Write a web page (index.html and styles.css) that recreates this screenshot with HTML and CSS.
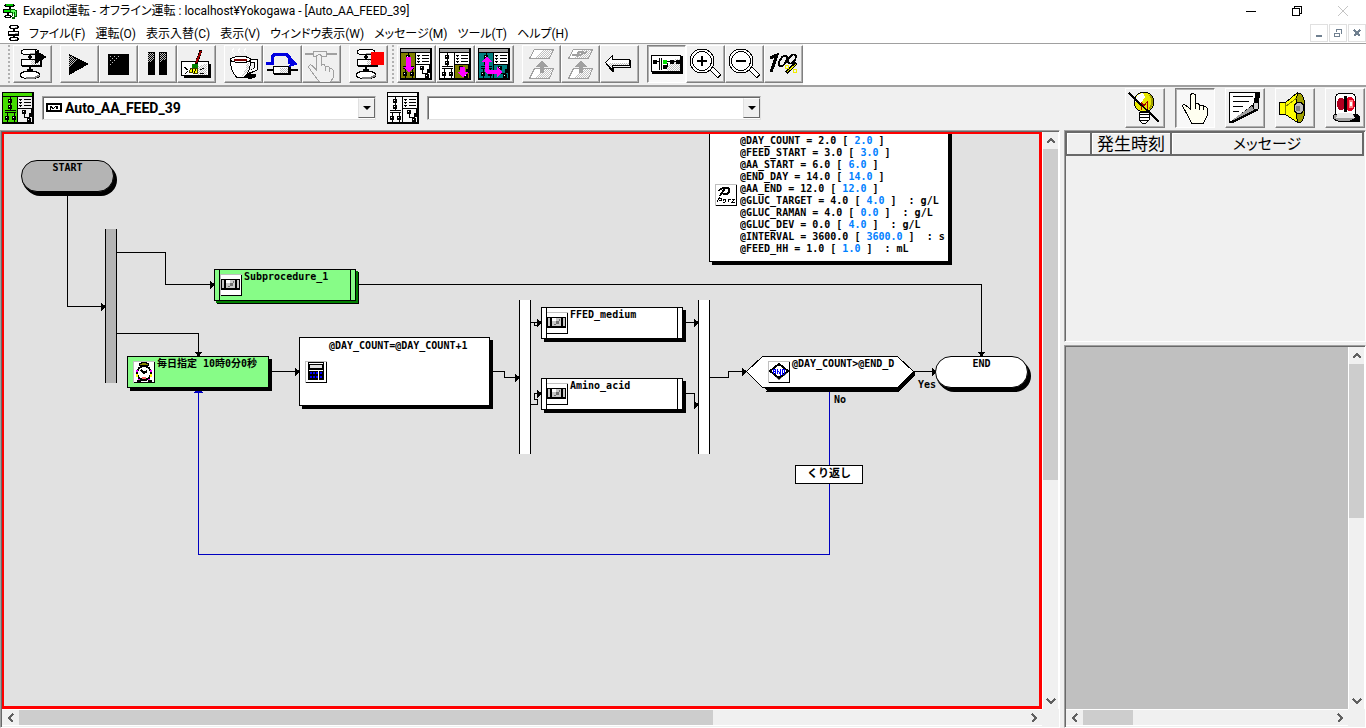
FILE: index.html
```html
<!DOCTYPE html>
<html lang="ja">
<head>
    <meta charset="UTF-8">
    <title>Exapilot運転</title>
    <link rel="stylesheet" href="styles.css">
</head>
<body>
    <!-- shared icon parts -->
    <svg class="defs" width="0" height="0" aria-hidden="true">
        <defs>
            <pattern id="dither" width="2" height="2" patternUnits="userSpaceOnUse">
                <path d="M0 0h1v1h-1zM1 1h1v1h-1z" fill="#c0c0c0"/>
            </pattern>
            <pattern id="specks" width="4" height="4" patternUnits="userSpaceOnUse">
                <path d="M0 0h1v1h-1zM2 2h1v1h-1z" fill="#c0c0c0"/>
            </pattern>
            <symbol id="flow" viewBox="0 0 36 36">
                <path d="M16 9v4M16 20v6M13 24h6M14 11h4" stroke="#000" stroke-width="2" fill="none"/>
                <ellipse cx="16" cy="6" rx="9" ry="3" fill="#fff" stroke="#000"/>
                <path d="M16 8q6 0 8-2" stroke="#a0a0a0" fill="none"/>
                <rect x="7.500" y="13.500" width="19" height="6" fill="#fff" stroke="#000"/>
                <path d="M8 20h20M27 14v6" stroke="#000" stroke-width="2"/>
                <rect x="17" y="14" width="8" height="5" fill="url(#dither)"/>
                <ellipse cx="16" cy="29" rx="10" ry="4" fill="#fff" stroke="#000"/>
                <path d="M12 32q10 1 13-3" stroke="#808080" stroke-width="2" fill="none"/>
            </symbol>
            <symbol id="chart" viewBox="0 0 32 32">
                <path d="M0 .5h31M.5 0v31M0 4.500h31M15.500 4v27M16 16.500h15" stroke="#000" fill="none"/>
                <path d="M31 0v32M0 31h32" stroke="#000" stroke-width="2"/>
                <path d="M6 7h4v4h-4zM6 13h4v4h-4zM3 24h4v4h-4zM10 24h4v4h-4zM20 18h4v4h-4zM27 21h4v4h-4zM25 26h4v4h-4z" fill="#000"/>
                <path d="M7 8h1v1h-1zM7 14h1v1h-1zM4 25h1v1h-1zM11 25h1v1h-1zM21 19h1v1h-1zM26 27h1v1h-1z" fill="#fff"/>
                <path d="M8.500 5v13M3 18.500h11M3 20.500h11M5.500 20v10M12.500 20v10M22.500 22v3.500h5M29.500 17v4" stroke="#000" fill="none"/>
                <path d="M17.500 7l1 1 1-1M17.500 10l1 1 1-1M17.500 13l1 1 1-1M22 7.500h7M22 10.500h7M22 13.500h7" stroke="#000" fill="none"/>
            </symbol>
            <symbol id="unit" viewBox="0 0 22 22">
                <path d="M0 0h22v22h-22z" fill="#fff"/>
                <path d="M.5 22v-21.500h21" stroke="#c0c0c0" fill="none"/>
                <path d="M21.500 1v20.500h-21" stroke="#000" fill="none"/>
                <path d="M1 5h19v11h-19z" fill="#000"/>
                <path d="M2 6h2v8h-2zM6 6h9v8h-9zM17 6h2v8h-2z" fill="#c8c8c8"/>
                <path d="M8 12h2v1h-2zM10 9h3v3h-3zM13 7h1v2h-1z" fill="#707070"/>
                <path d="M6 6h4v3h-4z" fill="#fff"/>
            </symbol>
            <symbol id="up" viewBox="0 0 12 12"><path d="M2 8l4-4 4 4" fill="none" stroke="#606060" stroke-width="2"/></symbol>
            <symbol id="down" viewBox="0 0 12 12"><path d="M2 4l4 4 4-4" fill="none" stroke="#606060" stroke-width="2"/></symbol>
            <symbol id="left" viewBox="0 0 12 12"><path d="M8 2l-4 4 4 4" fill="none" stroke="#606060" stroke-width="2"/></symbol>
            <symbol id="right" viewBox="0 0 12 12"><path d="M4 2l4 4-4 4" fill="none" stroke="#606060" stroke-width="2"/></symbol>
        </defs>
    </svg>

    <header class="titlebar">
        <svg class="app-icon" width="16" height="16" viewBox="0 0 16 16">
            <path d="M3 1h9v1h1v1h-1v1h-9v-1h-1v-1h1z"/>
            <path d="M4 1h7v2h-7z" fill="#00c000"/>
            <path d="M7 4h2v2h-2zM1 6h9v4h-9z"/>
            <path d="M2 7h6v2h-6z" fill="#00e000"/>
            <path d="M8 6h5v1h2v7h-2v2h-3v-2h2v-3h-1v2h-1v-3h-2z" fill="#006000"/>
            <path d="M9 7h4v1h1v5h-1v-4h-1v2h-1v-2h-2z" fill="#60ff60"/>
            <path d="M5 10h2v2h2v1h1v1h-1v1h-6v-1h-1v-1h1v-1h2z"/>
            <path d="M4 13h4v1h-4z" fill="#fff"/>
        </svg>
        <h1 class="title">Exapilot運転 - オフライン運転 : localhost¥Yokogawa - [Auto_AA_FEED_39]</h1>
        <div class="window-buttons">
            <button aria-label="最小化"><svg width="12" height="12" viewBox="0 0 12 12"><path d="M1 6.500h10" stroke="#000"/></svg></button>
            <button aria-label="元に戻す"><svg width="12" height="12" viewBox="0 0 12 12"><path d="M1.500 3.500h7v7h-7zM3.500 3.500v-2h7v7h-2" stroke="#000" fill="none"/></svg></button>
            <button aria-label="閉じる"><svg width="12" height="12" viewBox="0 0 12 12"><path d="M1 1l10 10M11 1l-10 10" stroke="#c4c4c4"/></svg></button>
        </div>
    </header>

    <nav class="menubar">
        <svg class="menu-icon" width="16" height="16" viewBox="0 0 16 16">
            <path d="M4 0h8v1h1v2h-1v1h-3v2h4v5h-4v1h3v1h1v2h-1v1h-8v-1h-1v-2h1v-1h3v-1h-5v-5h5v-2h-3v-1h-1v-2h1z"/>
            <path d="M5 1h6v2h-6zM3 7h9v2h-9zM5 13h6v2h-6z" fill="#fff"/>
            <path d="M9 2h2v1h-2zM9 8h3v1h-3zM9 14h2v1h-2z" fill="#a0a0a0"/>
        </svg>
        <button>ファイル(F)</button>
        <button>運転(O)</button>
        <button>表示入替(C)</button>
        <button>表示(V)</button>
        <button>ウィンドウ表示(W)</button>
        <button>メッセージ(M)</button>
        <button>ツール(T)</button>
        <button>ヘルプ(H)</button>
        <div class="child-buttons">
            <button aria-label="最小化"><svg width="10" height="10" viewBox="0 0 10 10"><path d="M2 8h6" stroke="#708090" stroke-width="2"/></svg></button>
            <button aria-label="元に戻す"><svg width="10" height="10" viewBox="0 0 10 10"><path d="M1.500 5.500h5v3h-5zM3.500 4v-2.500h5v4h-1M1 5h6M3 1.500h6" stroke="#708090" fill="none"/></svg></button>
            <button aria-label="閉じる"><svg width="10" height="10" viewBox="0 0 10 10"><path d="M2 2l6 6M8 2l-6 6" stroke="#708090" stroke-width="2"/></svg></button>
        </div>
    </nav>

    <div class="toolbar">
        <div class="tool-group">
            <span class="grip"></span>
            <div class="tools">
                <button aria-label="開始"><svg viewBox="0 0 36 36"><use href="#flow"/><path d="M21 4l12 7-12 7z"/></svg></button>
            </div>
            <div class="tools">
                <button aria-label="実行"><svg viewBox="0 0 36 36"><path d="M8 8l20 10-20 11z"/><path d="M8 9l9 5-9 7z" fill="url(#dither)"/></svg></button>
                <button aria-label="停止"><svg viewBox="0 0 36 36"><path d="M8 8h21v21h-21z"/><path d="M9 9h14l-8 7-6 5z" fill="url(#specks)"/></svg></button>
                <button aria-label="一時停止"><svg viewBox="0 0 36 36"><path d="M9 6h7v23h-7zM20 6h8v23h-8z"/><path d="M9 7h6v7l-6 3zM21 7h6v6l-6 3z" fill="url(#dither)"/></svg></button>
                <button aria-label="消去"><svg viewBox="0 0 36 36"><path d="M6 18h27v14h-27z"/><path d="M3.500 15.500h27v14h-27z" fill="#fff" stroke="#000"/><path d="M19 21l10-4v12h-10z" fill="url(#dither)"/><path d="M6 21l4 3M7 28l3-3M22 24l4-2M22 27l4 1" stroke="#000"/><path d="M23 4l-2 6-3 8" stroke="#000" stroke-width="3" fill="none"/><path d="M23 5l-2 5-3 7" stroke="#a00000" stroke-width="2" fill="none"/><path d="M14 18h6v4h-6z" fill="#008000"/><path d="M13 22h7l-1 6-8-2z" fill="#ff0" stroke="#404000"/><path d="M15 23l-1 3M18 23l-2 4" stroke="#000"/></svg></button>
            </div>
            <div class="tools">
                <button aria-label="休止"><svg viewBox="0 0 36 36"><path d="M12 31l10-3h9v3l-5 2z"/><path d="M25 15h6v8l-8 4" fill="none" stroke="#000" stroke-width="4"/><path d="M25 15h6v8l-8 3" fill="none" stroke="#fff" stroke-width="2"/><path d="M5.500 14q0 11 6 17h8q6-6 6-17z" fill="#fff" stroke="#000"/><path d="M22 17h2q0 8-5 13h-3q5-5 6-13z" fill="url(#dither)"/><ellipse cx="15.500" cy="13.500" rx="10" ry="3" fill="#fff" stroke="#000"/><path d="M9 13h13v2h-13z" fill="#780000"/><path d="M9 2l-2 3 3 3M15 2l-2 3 3 3M21 2l-2 3 3 3" stroke="#fff" fill="none"/></svg></button>
                <button aria-label="スキップ"><svg viewBox="0 0 36 36"><path d="M2 17h6v-6l3-3h11l3 3v5h4" fill="none" stroke="#0000e0" stroke-width="3"/><path d="M27 12l7 6-9 3z" fill="#0000e0"/><path d="M3 24h31" stroke="#000" stroke-width="2"/><path d="M9.500 20.500h15v7h-15z" fill="#fff" stroke="#000"/><path d="M16 22h8v5h-8z" fill="url(#dither)"/><path d="M10 28h16v-7" stroke="#000" fill="none" stroke-width="2"/></svg></button>
                <button aria-label="手動" disabled><svg viewBox="0 0 36 36"><path d="M2 8h9M24 8h10" stroke="#a0a0a0" stroke-width="2"/><path d="M10.500 5.500h13v5h-13z" fill="none" stroke="#a0a0a0"/><path d="M13.500 24v-14q3-3 5 0v9q3-2 4 2 4-2 4 2 4-1 4 3v5l-3 5h-11l-7-9-4-6q1-4 4-1z" fill="#f0f0f0" stroke="#a0a0a0"/><path d="M22.500 20v5M26.500 22v4" stroke="#a0a0a0"/></svg></button>
            </div>
            <div class="tools">
                <button aria-label="強制終了"><svg viewBox="0 0 36 36"><use href="#flow"/><path d="M21 6h13v13h-13z" fill="#f00"/></svg></button>
            </div>
        </div>
        <div class="tool-group">
            <span class="grip"></span>
            <div class="tools">
                <button aria-label="表示1"><svg viewBox="0 0 36 36"><path d="M2 2h32v32h-32z" fill="#fff"/><path d="M2 2h32v4h-32z" fill="#a0a0a0"/><path d="M2 6h15v28h-15z" fill="#808000"/><use href="#chart" x="2" y="2" width="32" height="32"/><path d="M8 11h5v10h3l-5 6-5-6h2z" fill="#f0f"/></svg></button>
                <button aria-label="表示2"><svg viewBox="0 0 36 36"><path d="M2 2h32v32h-32z" fill="#fff"/><path d="M2 2h32v4h-32z" fill="#a0a0a0"/><path d="M17 18h16v15h-16z" fill="#808000"/><use href="#chart" x="2" y="2" width="32" height="32"/><path d="M23 21h5v5h3l-5 6-6-6h3z" fill="#f0f"/></svg></button>
                <button aria-label="表示3"><svg viewBox="0 0 36 36"><path d="M2 2h32v32h-32z" fill="#008080"/><path d="M2 2h32v4h-32z" fill="#a0a0a0"/><path d="M17 6h16v12h-16z" fill="#fff"/><use href="#chart" x="2" y="2" width="32" height="32"/><path d="M11 10l5 6h-3v8h8v-3l6 5-6 5v-3h-10l-2-2v-10h-3z" fill="#f0f"/></svg></button>
            </div>
            <div class="tools">
                <button aria-label="上へ" disabled><svg viewBox="0 0 36 36"><path d="M11.500 3.500h19l-4 9h-20zM11.500 22.500h19l-4 10h-20z" fill="#fff" stroke="#a0a0a0"/><path d="M20 4h10l-4 8h-13zM20 23h10l-4 9h-13z" fill="url(#dither)"/><path d="M19 14l6 7h-4v6h-4v-6h-4z" fill="#a0a0a0"/></svg></button>
                <button aria-label="上へ展開" disabled><svg viewBox="0 0 36 36"><path d="M11.500 3.500h19l-4 9h-20zM11.500 22.500h19l-4 10h-20z" fill="#fff" stroke="#a0a0a0"/><path d="M20 4h10l-4 8h-13zM20 23h10l-4 9h-13z" fill="url(#dither)"/><path d="M10 9h5l2-3h5M15 10l10-4" stroke="#a0a0a0" stroke-width="2" fill="none"/><path d="M19 14l6 7h-4v6h-4v-6h-4z" fill="#a0a0a0"/></svg></button>
                <button aria-label="戻る"><svg viewBox="0 0 36 36"><path d="M5 18l7 6v-3h17v-7h1v8h-17v4h-2z"/><path d="M4.500 16.500l7-7v4h17v6h-17v4z" fill="#fff" stroke="#000"/><path d="M10 17h18v2h-17v3l-4-4z" fill="url(#dither)"/></svg></button>
            </div>
            <div class="tools">
                <button class="pressed" aria-label="全体図"><svg viewBox="0 0 36 36"><path d="M4 10h31v18h-31z"/><path d="M3.500 9.500h29v16h-29z" fill="#fff" stroke="#000"/><path d="M18 21l10-8h4v12h-13z" fill="url(#dither)"/><path d="M5 15.500h5M11.500 12v12M13.500 12v12M16 15.500h15M19.500 17v3h-3M10 15h2" stroke="#000" fill="none"/><path d="M5 14h4v4h-4zM22 14h4v4h-4zM28 14h4v4h-4zM15 19h4v4h-4z"/><path d="M15 14h4v4h-4z" fill="#0d0"/></svg></button>
                <button aria-label="拡大"><svg viewBox="0 0 36 36"><path d="M24 22l9 9" stroke="#000" stroke-width="5"/><path d="M25 23l7 7" stroke="#fff" stroke-width="3"/><circle cx="15" cy="15" r="12" fill="#fff" stroke="#000"/><circle cx="15" cy="15" r="9.500" fill="#fff" stroke="#000"/><path d="M10 15h10M15 10v10" stroke="#000" stroke-width="2"/></svg></button>
                <button aria-label="縮小"><svg viewBox="0 0 36 36"><path d="M24 22l9 9" stroke="#000" stroke-width="5"/><path d="M25 23l7 7" stroke="#fff" stroke-width="3"/><circle cx="15" cy="15" r="12" fill="#fff" stroke="#000"/><circle cx="15" cy="15" r="9.500" fill="#fff" stroke="#000"/><path d="M10 15h10" stroke="#000" stroke-width="2"/></svg></button>
                <button aria-label="等倍"><svg viewBox="0 0 36 36"><path d="M5 12l7-3-6 17" fill="none" stroke="#000" stroke-width="3"/><ellipse cx="18" cy="15" rx="3" ry="6" transform="rotate(30 18 15)" fill="none" stroke="#000" stroke-width="2"/><ellipse cx="27" cy="13" rx="3" ry="5" transform="rotate(35 27 13)" fill="none" stroke="#000" stroke-width="2"/><path d="M31 17l-10 10" stroke="#000" stroke-width="3"/><path d="M31 18l-9 8M20 19h3v3h-3zM28 23h3v3h-3z" stroke="#ee0" stroke-width="1" fill="none"/></svg></button>
            </div>
        </div>
    </div>

    <div class="selectbar">
        <svg class="chart-icon" viewBox="0 0 32 32"><path d="M0 0h32v32h-32z" fill="#f0f0f0"/><path d="M0 0h32v4h-17v28h-15z" fill="#4d0"/><use href="#chart"/></svg>
        <div class="combo">
            <svg width="16" height="9" viewBox="0 0 16 9"><path d="M1 1h14v7h-14z" fill="#fff" stroke="#000" stroke-width="2"/><path d="M4 3h2v1h1v1h1v-1h1v-1h3v3h-2v-2h-1v1h-1v1h-2v-1h-1v2h-1z"/></svg>
            <select aria-label="プロシージャ"><option>Auto_AA_FEED_39</option></select>
            <span class="combo-arrow"></span>
        </div>
        <svg class="chart-icon" viewBox="0 0 32 32"><path d="M0 0h32v32h-32z" fill="#fafafa"/><use href="#chart"/></svg>
        <div class="combo">
            <select aria-label="サブプロシージャ"><option></option></select>
            <span class="combo-arrow"></span>
        </div>
        <div class="status-tools">
            <button aria-label="ランプ"><svg viewBox="0 0 36 36"><circle cx="18" cy="13" r="10" fill="#e8e800" stroke="#000"/><path d="M9 13q0-8 8-9l2 4-4 6z" fill="#fff"/><path d="M24 6q5 8-1 14" stroke="#a0a000" fill="none" stroke-width="2"/><path d="M15 21v-8l3 4 3-4v8" stroke="#a00000" fill="none"/><path d="M13 23h10v8l-3 3h-4l-3-3z" fill="#fff" stroke="#000"/><path d="M13 25h11M13 28h11M14 31h9" stroke="#000"/><path d="M3 4l30 29" stroke="#000" stroke-width="2"/></svg></button>
            <button class="pressed" aria-label="操作"><svg viewBox="0 0 36 36"><path d="M14.500 20v-14q2-3 5 0v9q4-1 4 2 4-2 4 1 4-1 4 3v5l-4 8h-12l-3-6-6-11q1-3 4 0z" fill="#fffff0" stroke="#000"/><path d="M19.500 14v6M23.500 16v5M27.500 17v4" stroke="#000"/></svg></button>
            <button aria-label="記録"><svg viewBox="0 0 36 36"><path d="M3.500 3.500h30l-1 12-29 18z" fill="#fff" stroke="#000"/><path d="M7 7l2 1 2-1 2 1 2-1 2 1 2-1 2 1 2-1 2 1 2-1M7 12l2 1 2-1 2 1 2-1 2 1 2-1 2 1 2-1M7 17l2 1 2-1 2 1 2-1 2 1M7 22l2 1 2-1 2 1" stroke="#000" fill="none"/><path d="M3 34l23-18 7 5-26 13z"/><path d="M6 31l20-14 2 4-20 10z" fill="#a0a0a0"/><path d="M29 4h4v11h-5z"/><ellipse cx="30" cy="17" rx="3" ry="4" fill="#d0d0d0" stroke="#000"/></svg></button>
            <button aria-label="音"><svg viewBox="0 0 36 36"><ellipse cx="23" cy="19" rx="6" ry="15" fill="#a0a000" stroke="#000"/><path d="M3.500 13.500h6l12-10q-3 15 0 30l-12-8h-6z" fill="#ff0" stroke="#000"/><path d="M9 14v11M9 18l12-9" stroke="#808000"/><ellipse cx="23" cy="19" rx="5" ry="6" fill="#c0c0c0" stroke="#000"/><path d="M20 17h4v5h-4z" fill="#808080"/></svg></button>
            <button aria-label="警報"><svg viewBox="0 0 36 36"><path d="M8 29l6-4h17l3 3v5h-22z"/><ellipse cx="18" cy="28" rx="11" ry="5" fill="#a0a0a0" stroke="#000"/><path d="M9.500 25v-15q0-6 6-6h8q6 0 6 6v15z" fill="#fff" stroke="#000"/><ellipse cx="15" cy="15" rx="4" ry="6" fill="#b00020"/><ellipse cx="24" cy="15" rx="5" ry="7" fill="#e00020"/><path d="M19 7v16" stroke="#000" stroke-width="3"/><path d="M23 11h4v8h-4z" fill="#ff8080"/><path d="M24 13h2v4h-2z" fill="#fff"/><path d="M12 24h14l3 5h-19z" fill="#e8e8e8"/></svg></button>
        </div>
    </div>

    <main class="workspace">
        <section class="chart-pane">
            <div class="canvas">
                <!-- connectors -->
                <svg class="wires" width="1035" height="572" viewBox="4 134 1035 572">
                    <g fill="none" stroke="#000">
                        <path d="M67.500 195v111.500h38M117 252.500h48.500v32h49M117 333.500h81.500v23M271 371.500h28M358 284.500h623.500v72M491 371.500h13.500v6h15M531 322.500h10M534.500 323v2h3M531 404.500h6.500v-5h-3v-6h7M684 322.500h14M684 393.500h10.500v11h4M710 377.500h18.500v-6h18M913 371.500h23"/>
                        <path d="M829.500 388v166.500h-631v-165" stroke="#0000c0"/>
                    </g>
                    <path d="M101 303l4 3.500-4 4zM210 281l4 3.500-4 4zM295 368l4 3.500-4 4zM515 374l4 3.500-4 4zM537 319l4 3.500-4 4zM537 390l4 3.500-4 4zM694 319l4 3.500-4 4zM694 401l4 3.500-4 4zM742 368l4 3.500-4 4zM932 368l4 3.500-4 4zM195 352h7l-3.500 4zM978 352h7l-3.500 4z" stroke="#000"/>
                    <path d="M195 392h7l-3.500-4z" fill="#0000c0" stroke="#0000c0"/>
                    <path d="M764 391l3 1h132l16-19-3-3-16 17z"/>
                    <path d="M765 388h134l15-16v4l-15 14h-132z" stroke="#000"/>
                    <path d="M746.500 371.500l16-15h135l16 15-16 16h-135z" fill="#fff" stroke="#000"/>
                </svg>

                <div class="terminal start">START</div>
                <div class="sync sync-start"></div>
                <div class="sync sync-split"></div>
                <div class="sync sync-join"></div>

                <div class="node unit sub1 active">
                    <svg width="22" height="22"><use href="#unit"/></svg>
                    <span>Subprocedure_1</span>
                </div>
                <div class="node timer active">
                    <svg width="22" height="22" viewBox="0 0 22 22"><path d="M0 0h22v22h-22z" fill="#fff"/><path d="M.5 22v-21.500h21" stroke="#c0c0c0" fill="none"/><path d="M21.500 1v20.500h-21" stroke="#000" fill="none"/><path d="M6 3l5-2 5 2-2 3h-6z" fill="#880" stroke="#000"/><circle cx="11" cy="12" r="7" fill="#fff" stroke="#000" stroke-width="2"/><path d="M4 9v2M18 9v2M6 18v1M16 18v1" stroke="#e0f" stroke-width="2"/><path d="M4 13v3M18 13v3" stroke="#ff0" stroke-width="2"/><path d="M8 9l3 3 3-2" stroke="#000" stroke-width="2" fill="none"/><path d="M9 16h4v2h-4z" fill="#f66"/><path d="M4 20h4M15 20h4" stroke="#000" stroke-width="2"/></svg>
                    <span>毎日指定 10時0分0秒</span>
                </div>
                <div class="node calc">
                    <svg width="22" height="22" viewBox="0 0 22 22"><path d="M0 0h22v22h-22z" fill="#fff"/><path d="M.5 22v-21.500h21" stroke="#c0c0c0" fill="none"/><path d="M21.500 1v20.500h-21" stroke="#000" fill="none"/><path d="M3 1h16v18h-16z"/><path d="M5 4h12v3h-12z" fill="#e0e0e0"/><path d="M4 9.500h14M13.500 9v10M4 2.500h14" stroke="#fff"/><path d="M5 11h2v2h-2zM8 11h2v2h-2zM11 11h2v2h-2zM15 11h2v2h-2zM5 15h2v2h-2zM8 15h2v2h-2zM11 15h2v2h-2zM15 15h2v2h-2z" fill="#00f"/></svg>
                    <span>@DAY_COUNT=@DAY_COUNT+1</span>
                </div>
                <div class="node unit feed">
                    <svg width="22" height="22"><use href="#unit"/></svg>
                    <span>FFED_medium</span>
                </div>
                <div class="node unit amino">
                    <svg width="22" height="22"><use href="#unit"/></svg>
                    <span>Amino_acid</span>
                </div>
                <div class="decision">
                    <svg width="22" height="22" viewBox="0 0 22 22"><path d="M0 0h22v22h-22z" fill="#fff"/><path d="M.5 22v-21.500h21" stroke="#c0c0c0" fill="none"/><path d="M21.500 1v20.500h-21" stroke="#000" fill="none"/><path d="M6 15l5 4 9-7-3-2z" fill="#808080"/><path d="M2 10l9-7 9 7-9 7z" fill="#fff" stroke="#000" stroke-width="2"/><path d="M5 13v-5h2v5M5 10h2M9 13v-5l3 5v-5M14 8v5h2l1-2-1-3z" stroke="#00f" fill="none"/></svg>
                    <span>@DAY_COUNT&gt;@END_D</span>
                </div>
                <div class="terminal end">END</div>
                <span class="branch yes">Yes</span>
                <span class="branch no">No</span>
                <div class="loop">くり返し</div>

                <div class="params">
                    <svg width="22" height="22" viewBox="0 0 22 22"><path d="M0 0h22v22h-22z" fill="#fff"/><path d="M.5 22v-21.500h21" stroke="#c0c0c0" fill="none"/><path d="M21.500 1v20.500h-21" stroke="#000" fill="none"/><path d="M4 7q1-3 7-3 5 0 3 4-2 3-6 2M10 4l-5 8" stroke="#000" stroke-width="2" fill="none"/><path d="M5 13l-3 5M4 14h2v2h-2M8 17v-2h3l-1 3h-2M13 18l1-3h2M17 15h3l-3 3h3" stroke="#000" fill="none"/></svg>
                    <ul>
                        <li>@DAY_COUNT = 2.0 [ <b>2.0</b> ]</li>
                        <li>@FEED_START = 3.0 [ <b>3.0</b> ]</li>
                        <li>@AA_START = 6.0 [ <b>6.0</b> ]</li>
                        <li>@END_DAY = 14.0 [ <b>14.0</b> ]</li>
                        <li>@AA_END = 12.0 [ <b>12.0</b> ]</li>
                        <li>@GLUC_TARGET = 4.0 [ <b>4.0</b> ]  : g/L</li>
                        <li>@GLUC_RAMAN = 4.0 [ <b>0.0</b> ]  : g/L</li>
                        <li>@GLUC_DEV = 0.0 [ <b>4.0</b> ]  : g/L</li>
                        <li>@INTERVAL = 3600.0 [ <b>3600.0</b> ]  : se</li>
                        <li>@FEED_HH = 1.0 [ <b>1.0</b> ]  : mL</li>
                    </ul>
                </div>
            </div>
            <div class="scroll-v">
                <button aria-label="上"><svg width="12" height="12"><use href="#up"/></svg></button>
                <div class="track"><div class="thumb chart-v"></div></div>
                <button aria-label="下"><svg width="12" height="12"><use href="#down"/></svg></button>
            </div>
            <div class="scroll-h">
                <button aria-label="左"><svg width="12" height="12"><use href="#left"/></svg></button>
                <div class="track"><div class="thumb chart-h"></div></div>
                <button aria-label="右"><svg width="12" height="12"><use href="#right"/></svg></button>
            </div>
        </section>

        <aside class="side">
            <div class="messages">
                <table>
                    <thead>
                        <tr><th class="col-mark"></th><th class="col-time">発生時刻</th><th class="col-text">メッセージ</th></tr>
                    </thead>
                </table>
            </div>
            <div class="log-pane">
                <div class="log"></div>
                <div class="scroll-v">
                    <button aria-label="上"><svg width="12" height="12"><use href="#up"/></svg></button>
                    <div class="track"><div class="thumb log-v"></div></div>
                    <button aria-label="下"><svg width="12" height="12"><use href="#down"/></svg></button>
                </div>
                <div class="scroll-h">
                    <button aria-label="左"><svg width="12" height="12"><use href="#left"/></svg></button>
                    <div class="track"><div class="thumb log-h"></div></div>
                    <button aria-label="右"><svg width="12" height="12"><use href="#right"/></svg></button>
                </div>
            </div>
        </aside>
    </main>
</body>
</html>
```

FILE: styles.css
```css
* {
    box-sizing: border-box;
}
body {
    margin: 0;
    height: 100vh;
    display: flex;
    flex-direction: column;
    overflow: hidden;
    background-color: #f0f0f0;
    color: #000;
    font-family: Roboto, "Noto Sans CJK JP", sans-serif;
    font-size: 12px;
    font-feature-settings: "palt";
}
button {
    display: flex;
    align-items: center;
    justify-content: center;
    margin: 0;
    padding: 0;
    border: 0;
    background: none;
    color: inherit;
    font: inherit;
    font-feature-settings: inherit;
}
svg {
    display: block;
    flex: none;
    shape-rendering: crispEdges;
}
.defs {
    position: absolute;
}

/* title and menu */
.titlebar {
    display: flex;
    align-items: center;
    height: 22px;
    padding-left: 2px;
    background-color: #fff;
}
.title {
    flex: 1;
    margin: 0 0 0 5px;
    font-size: 12px;
    font-weight: normal;
    line-height: 22px;
    white-space: nowrap;
}
.window-buttons {
    display: flex;
}
.window-buttons button {
    width: 46px;
    height: 22px;
}
.menubar {
    display: flex;
    align-items: center;
    gap: 10px;
    height: 22px;
    padding-left: 6px;
    background-color: #fff;
    border-bottom: 1px solid #a0a0a0;
    white-space: nowrap;
}
.menu-icon {
    margin-right: -3px;
}
.child-buttons {
    display: flex;
    gap: 1px;
    margin-left: auto;
}
.child-buttons button {
    width: 18px;
    height: 18px;
    border: 1px solid #e0e0e0;
}

/* toolbar */
.toolbar {
    display: flex;
    height: 43px;
    background-color: #fff;
    border-bottom: 2px solid #a0a0a0;
}
.tool-group {
    display: flex;
    gap: 8px;
    padding-top: 1px;
    background-color: #f0f0f0;
}
.tool-group:first-child {
    padding-left: 8px;
}
.grip {
    width: 2px;
    height: 38px;
    margin: 0 -5px 0 0;
    background: repeating-linear-gradient(#b0b0b0 0 2px, #f0f0f0 2px 4px);
}
.tool-group:last-child .grip {
    margin-left: 4px;
}
.tools {
    display: flex;
}
.tools button {
    width: 39px;
    height: 38px;
}
.tools button,
.status-tools button {
    align-items: flex-start;
    justify-content: flex-start;
    background-color: #f0f0f0;
    border: 1px solid;
    border-color: #fff #808080 #808080 #fff;
    box-shadow: inset -1px -1px #b0b0b0;
}
.tools svg,
.status-tools svg {
    width: 36px;
    height: 36px;
}
.tools .pressed,
.status-tools .pressed {
    background-color: #f8f8f8;
    border-color: #808080 #fff #fff #808080;
    box-shadow: inset 1px 1px #b0b0b0;
}

/* procedure selectors */
.selectbar {
    display: flex;
    align-items: center;
    height: 43px;
    padding: 0 0 2px 2px;
}
.chart-icon {
    width: 32px;
    height: 32px;
    margin-right: 8px;
}
.combo {
    display: flex;
    align-items: center;
    width: 334px;
    height: 24px;
    margin-right: 11px;
    padding-left: 3px;
    background-color: #fff;
    border: 1px solid;
    border-color: #a0a0a0 #e0e0e0 #e0e0e0 #a0a0a0;
    box-shadow: inset 1px 1px #696969;
}
.combo select {
    flex: 1;
    height: 20px;
    padding: 0 3px;
    appearance: none;
    border: 0;
    background: none;
    color: #000;
    font: bold 14px Roboto, "Noto Sans CJK JP", sans-serif;
}
.combo-arrow {
    display: flex;
    align-items: center;
    justify-content: center;
    width: 17px;
    height: 20px;
    background-color: #f0f0f0;
    border: 1px solid;
    border-color: #fff #696969 #696969 #e0e0e0;
    pointer-events: none;
}
.combo-arrow::after {
    content: "";
    border: 4px solid transparent;
    border-top-color: #000;
    border-bottom: 0;
}
.status-tools {
    display: flex;
    gap: 10px;
    margin-left: auto;
    padding-right: 1px;
}
.status-tools button {
    width: 40px;
    height: 40px;
}

/* work area */
.workspace {
    flex: 1;
    display: flex;
    gap: 4px;
    min-height: 0;
}
.chart-pane,
.log-pane {
    display: grid;
    grid-template-columns: 1fr 17px;
    grid-template-rows: 1fr 17px;
    border: 1px solid;
    border-color: #a0a0a0 #fff #fff #a0a0a0;
}
.chart-pane {
    flex: 1;
    min-width: 0;
    padding: 1px 0 1px 1px;
    box-shadow: inset 1px 1px #696969;
}
.canvas {
    position: relative;
    overflow: hidden;
    border: solid #f00;
    border-width: 2px 3px 3px 2px;
    background-color: #e1e1e1;
    font: bold 10px/12px "DejaVu Sans Mono", "Noto Sans CJK JP", monospace;
    white-space: nowrap;
}

/* scroll bars */
.scroll-v,
.scroll-h {
    display: flex;
    border: 1px solid #fff;
    border-width: 0 1px;
    background-color: #f0f0f0;
}
.scroll-v {
    flex-direction: column;
}
.scroll-h {
    border-width: 1px 0;
}
.scroll-v button {
    height: 17px;
}
.scroll-h button {
    width: 17px;
}
.track {
    flex: 1;
}
.thumb {
    background-color: #cdcdcd;
}
.chart-v {
    height: 61%;
}
.chart-h {
    width: 69%;
    height: 100%;
}
.log-v {
    height: 47%;
}
.log-h {
    width: 20%;
    height: 100%;
}

/* chart elements */
.wires,
.terminal,
.sync,
.node,
.decision,
.branch,
.loop,
.params {
    position: absolute;
}
.wires {
    left: 0;
    top: 0;
}
.terminal {
    width: 93px;
    height: 32px;
    padding-top: 1px;
    border: 1px solid #000;
    border-radius: 16px;
    background-color: #fff;
    box-shadow: 1px 2px #000, 3px 4px #000;
    text-align: center;
}
.start {
    left: 17px;
    top: 26px;
    background-color: #b4b4b4;
}
.end {
    left: 931px;
    top: 222px;
}
.sync {
    width: 12px;
    height: 154px;
    border: solid #000;
    border-width: 0 1px;
    background-color: #fff;
}
.sync-start {
    left: 101px;
    top: 95px;
    background-color: #b4b4b4;
}
.sync-split {
    left: 515px;
    top: 166px;
}
.sync-join {
    left: 694px;
    top: 166px;
}
.node {
    display: flex;
    gap: 2px;
    width: 142px;
    height: 32px;
    padding: 4px 5px;
    border: 1px solid #000;
    background-color: #fff;
    box-shadow: 3px 3px #000;
}
.node span {
    margin-top: -3px;
}
.active {
    background-color: #87fc87;
}
.unit::before,
.unit::after {
    content: "";
    position: absolute;
    top: 0;
    bottom: 0;
    left: 4px;
    border-left: 1px solid #000;
}
.unit::after {
    left: auto;
    right: 4px;
}
.sub1 {
    left: 210px;
    top: 135px;
    box-shadow: 2px 2px #008000, 3px 3px #000;
}
.timer {
    left: 123px;
    top: 222px;
}
.calc {
    left: 295px;
    top: 203px;
    width: 191px;
    height: 69px;
    padding-top: 23px;
}
.calc span {
    margin-top: -21px;
}
.feed {
    left: 537px;
    top: 173px;
}
.amino {
    left: 537px;
    top: 244px;
}
.feed,
.amino {
    padding-left: 4px;
}
.decision {
    display: flex;
    gap: 2px;
    left: 764px;
    top: 227px;
}
.decision span {
    margin-top: -3px;
}
.yes {
    left: 914px;
    top: 245px;
}
.no {
    left: 830px;
    top: 260px;
}
.loop {
    left: 791px;
    top: 331px;
    width: 68px;
    height: 19px;
    border: 1px solid #000;
    background-color: #fff;
    font-size: 11px;
    line-height: 16px;
    text-align: center;
}
.params {
    display: flex;
    align-items: center;
    gap: 3px;
    left: 705px;
    top: -6px;
    width: 240px;
    height: 134px;
    padding: 0 3px 0 5px;
    border: 1px solid #000;
    background-color: #fff;
    box-shadow: 3px 3px #000;
}
.params ul {
    flex: 1;
    margin: 0;
    padding: 0;
    overflow: hidden;
    list-style: none;
}
.params li {
    white-space: pre;
}
.params b {
    color: #0080ff;
}

/* message list and log */
.side {
    display: flex;
    flex-direction: column;
    gap: 3px;
    width: 302px;
}
.messages {
    height: 212px;
    border: 1px solid;
    border-color: #a0a0a0 #fff #fff #a0a0a0;
    box-shadow: inset 1px 1px #696969;
}
.messages table {
    width: 299px;
    table-layout: fixed;
    border-collapse: collapse;
}
.messages th {
    height: 23px;
    padding: 0;
    border: 2px solid #696969;
    background-color: #f0f0f0;
    box-shadow: inset 1px 1px #fff;
    font-size: 17px;
    font-weight: normal;
    line-height: 20px;
}
.messages .col-text {
    font-size: 15px;
}
.col-mark {
    width: 25px;
}
.col-time {
    width: 80px;
}
.log-pane {
    flex: 1;
    padding: 1px 0 1px 1px;
    box-shadow: inset 1px 1px #696969;
}
.log {
    background-color: #c0c0c0;
}
```
